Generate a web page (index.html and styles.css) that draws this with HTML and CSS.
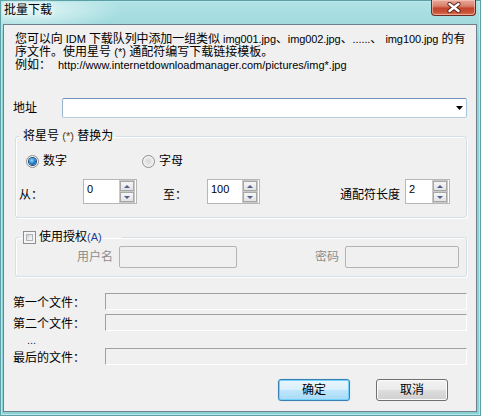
FILE: index.html
```html
<!DOCTYPE html>
<html lang="zh-CN">
<head>
<meta charset="utf-8">
<title>批量下载</title>
<link rel="stylesheet" href="styles.css">
</head>
<body>
<div class="window">
  <div class="titlebar">
    <span class="title">批量下载</span>
    <div class="close">
      <svg width="16" height="11" viewBox="0 0 16 11">
        <path d="M3.5 2 L12.5 9 M12.5 2 L3.5 9" stroke="#5a2418" stroke-width="4.2" stroke-linecap="round"/>
        <path d="M3.5 2 L12.5 9 M12.5 2 L3.5 9" stroke="#ffffff" stroke-width="2.4" stroke-linecap="round"/>
      </svg>
    </div>
  </div>
  <div class="panel">
    <p class="intro">
      <span class="line tight">您可以向 <span class="en">IDM</span> 下载队列中添加一组类似 <span class="en">img001.jpg</span>、<span class="en">img002.jpg</span>、<span class="en">......</span>、 <span class="en">img100.jpg</span> 的有</span>
      <span class="line">序文件。使用星号 <span class="en">(*)</span> 通配符编写下载链接模板。</span>
      <span class="line"><span class="eg">例如：</span><span class="en">http://www.internetdownloadmanager.com/pictures/img*.jpg</span></span>
    </p>

    <div class="addr-row">
      <span class="addr-label">地址</span>
      <div class="combo">
        <svg class="combo-arrow" width="7" height="4" viewBox="0 0 7 4"><polygon points="0,0 7,0 3.5,4" fill="#000"/></svg>
      </div>
    </div>

    <fieldset class="group group-replace">
      <legend class="legend-replace">将星号 <span class="en accent">(*)</span> 替换为</legend>
      <div class="radio-row">
        <span class="radio radio-num"><span class="radio-dot checked"></span>数字</span>
        <span class="radio radio-alpha"><span class="radio-dot"></span>字母</span>
      </div>
      <div class="spin-row">
        <span class="spin-label l-from">从：</span>
        <div class="spin s-from">
          <span class="spin-field en">0</span>
          <span class="spin-btns"><span class="spin-btn up"></span><span class="spin-btn down"></span></span>
        </div>
        <span class="spin-label l-to">至：</span>
        <div class="spin s-to">
          <span class="spin-field en">100</span>
          <span class="spin-btns"><span class="spin-btn up"></span><span class="spin-btn down"></span></span>
        </div>
        <span class="spin-label l-len">通配符长度</span>
        <div class="spin s-len">
          <span class="spin-field en">2</span>
          <span class="spin-btns"><span class="spin-btn up"></span><span class="spin-btn down"></span></span>
        </div>
      </div>
    </fieldset>

    <fieldset class="group group-auth">
      <legend class="legend-auth"><span class="checkbox"><span class="checkbox-inner"></span></span>使用授权<span class="en blue">(A)</span></legend>
      <div class="auth-row">
        <span class="auth-label l-user">用户名</span>
        <span class="auth-input i-user"></span>
        <span class="auth-label l-pass">密码</span>
        <span class="auth-input i-pass"></span>
      </div>
    </fieldset>

    <div class="file-row first">
      <span class="file-label">第一个文件：</span>
      <span class="file-box"></span>
    </div>
    <div class="file-row second">
      <span class="file-label">第二个文件：</span>
      <span class="file-box"></span>
    </div>
    <div class="dots-row"><span class="en dots">...</span></div>
    <div class="file-row last">
      <span class="file-label">最后的文件：</span>
      <span class="file-box"></span>
    </div>

    <div class="button-row">
      <span class="btn btn-default">确定</span>
      <span class="btn">取消</span>
    </div>
  </div>
</div>
</body>
</html>
```

FILE: styles.css
```css
* { box-sizing: border-box; }

html, body {
  margin: 0;
  padding: 0;
  width: 481px;
  height: 416px;
  overflow: hidden;
  background: #9cd8db;
}

body {
  font-family: "Liberation Sans", "Noto Sans CJK SC", sans-serif;
  font-size: 12px;
  color: #000;
}

.en {
  font-family: "Liberation Sans", sans-serif;
  font-size: 11px;
}

.window {
  width: 481px;
  height: 416px;
  padding: 0 4px 4px 3px;
  display: flex;
  flex-direction: column;
  background:
    radial-gradient(ellipse 90px 22px at 30px 10px, rgba(235, 250, 250, 0.85), rgba(235, 250, 250, 0) 100%),
    linear-gradient(to bottom, #b3e3e6 0px, #a2dbde 22px, #8fd3d7 40px, #8ad1d5 100%);
  box-shadow: inset 0 0 0 1px #5e9fa5, inset 0 0 0 2px #b8e8ea;
}

/* title bar */
.titlebar {
  height: 24px;
  display: flex;
  justify-content: space-between;
  align-items: flex-start;
}

.title {
  padding: 3px 0 0 1px;
  line-height: 14px;
  font-size: 12px;
  color: #000;
  text-shadow: 0 0 5px rgba(255, 255, 255, 0.95), 0 0 9px rgba(255, 255, 255, 0.8);
}

.close {
  width: 45px;
  height: 16px;
  margin-right: 1px;
  border: 1px solid #6e2c20;
  border-top: none;
  border-radius: 0 0 4px 4px;
  background: linear-gradient(to bottom, #e9a99b 0%, #d9826c 40%, #c4452c 55%, #c85236 80%, #d9765a 100%);
  box-shadow: inset 0 0 0 1px rgba(255, 210, 200, 0.55);
  display: flex;
  align-items: center;
  justify-content: center;
}

/* main panel */
.panel {
  flex: 1;
  border: 1px solid #6f808c;
  background: #f0f0f0;
  padding: 0 9px;
  display: flex;
  flex-direction: column;
}

.intro {
  margin: 8px 0 0 2px;
  line-height: 13px;
}

.intro .line {
  display: block;
  white-space: nowrap;
  height: 13px;
}

.intro .line.tight {
  letter-spacing: -0.1px;
}

.eg {
  display: inline-block;
  width: 43px;
}

/* address */
.addr-row {
  margin-top: 26px;
  height: 20px;
  display: flex;
  align-items: center;
}

.addr-label {
  width: 49px;
  line-height: 14px;
}

.combo {
  flex: 1;
  height: 20px;
  background: #fff;
  border: 1px solid;
  border-color: #6f93b8 #a6c5de #b3cde2 #9ab5cd;
  border-radius: 2px;
  display: flex;
  align-items: center;
  justify-content: flex-end;
  padding-right: 3px;
}

/* group boxes */
.group {
  margin: 0 0 0 2px;
  padding: 0;
  min-width: 0;
  border: 1px solid #d5dfe5;
  border-radius: 3px;
  box-shadow: inset 1px 1px 0 #fff, 1px 1px 0 #fff;
}

.group legend {
  margin-left: 4px;
  padding: 0 3px;
  height: 14px;
  line-height: 14px;
  white-space: nowrap;
}

.group-replace {
  margin-top: 11px;
  padding-bottom: 13px;
}

.accent { color: #5a3a08; }
.blue { color: #1c3f94; }

.radio-row {
  margin-top: 11px;
  height: 14px;
  display: flex;
  align-items: center;
}

.radio {
  display: inline-flex;
  align-items: center;
  line-height: 14px;
}

.radio-num { margin-left: 10px; width: 116px; }

.radio-dot {
  width: 13px;
  height: 13px;
  border-radius: 50%;
  border: 1px solid #8e8f8f;
  background: radial-gradient(circle at 50% 50%, #d6d6d6 0%, #e8e8e8 45%, #f7f7f7 75%);
  margin-right: 4px;
  display: inline-flex;
  align-items: center;
  justify-content: center;
}

.radio-dot.checked::after {
  content: "";
  width: 7px;
  height: 7px;
  border-radius: 50%;
  background: radial-gradient(circle at 40% 35%, #9bdcff 0%, #2a86d0 45%, #0c4a86 100%);
  box-shadow: 0 0 0 1px #1d4f7e;
}

.spin-row {
  margin-top: 11px;
  height: 25px;
  display: flex;
  align-items: flex-start;
}

.spin-label {
  margin-top: 9px;
  line-height: 14px;
  white-space: nowrap;
}

.l-from { margin-left: 3px; width: 64px; }
.l-to { margin-left: 26px; width: 44px; }
.l-len { margin-left: 80px; width: 65px; }

.spin {
  height: 25px;
  display: flex;
  border: 1px solid #b7b7b7;
  background: #fff;
}

.s-from { width: 54px; }
.s-to { width: 53px; }
.s-len { width: 45px; }

.spin-field {
  flex: 1;
  padding: 3px 0 0 3px;
  line-height: 12px;
}

.spin-btns {
  width: 16px;
  margin: 0 1px 0 0;
  padding: 1px;
  display: flex;
  flex-direction: column;
  gap: 1px;
  background: #c8c8c8;
}

.spin-btn {
  flex: 1;
  background: linear-gradient(to bottom, #f6f6f6, #e2e2e2);
  border: 1px solid #a7a7a7;
  display: flex;
  align-items: center;
  justify-content: center;
}

.spin-btn.up::after {
  content: "";
  border-left: 3px solid transparent;
  border-right: 3px solid transparent;
  border-bottom: 3px solid #4d5f8c;
}

.spin-btn.down::after {
  content: "";
  border-left: 3px solid transparent;
  border-right: 3px solid transparent;
  border-top: 3px solid #4d5f8c;
}

/* auth group */
.group-auth {
  margin-top: 12px;
  padding-bottom: 8px;
}

.group-auth legend {
  padding-right: 20px;
  display: flex;
  align-items: center;
}

.checkbox {
  width: 13px;
  height: 13px;
  border: 1px solid #8e8f8f;
  background: #f4f4f4;
  padding: 2px;
  margin-right: 3px;
  display: inline-flex;
}

.checkbox-inner {
  flex: 1;
  border: 1px solid #aeb3b9;
  background: linear-gradient(135deg, #cfd1d3 0%, #ececec 60%, #fafafa 100%);
}

.auth-row {
  margin-top: 2px;
  height: 22px;
  display: flex;
  align-items: center;
}

.auth-label {
  color: #8d8d8d;
  text-align: right;
  line-height: 14px;
  margin-right: 6px;
}

.l-user { width: 97px; }
.l-pass { width: 102px; }

.auth-input {
  height: 22px;
  border: 1px solid #b2b4b6;
  border-radius: 2px;
  background: #f0f0f0;
}

.i-user { width: 118px; }
.i-pass { width: 114px; }

/* file rows */
.file-row {
  height: 17px;
  display: flex;
  align-items: center;
}

.file-row.first { margin-top: 16px; }
.file-row.second { margin-top: 4px; }

.file-label {
  width: 92px;
  line-height: 14px;
  padding-top: 2px;
  white-space: nowrap;
}

.file-box {
  flex: 1;
  height: 17px;
  border-top: 1px solid #a0a0a0;
  border-left: 1px solid #a0a0a0;
  border-right: 1px solid #ffffff;
  border-bottom: 1px solid #ffffff;
}

.dots-row {
  height: 17px;
  line-height: 19px;
}

.dots {
  margin-left: 14px;
  color: #1a2a5a;
}

/* buttons */
.button-row {
  margin-top: 14px;
  padding-right: 19px;
  display: flex;
  justify-content: flex-end;
  gap: 26px;
}

.btn {
  width: 72px;
  height: 22px;
  border: 1px solid #707070;
  border-radius: 3px;
  background: linear-gradient(to bottom, #f2f2f2 0%, #ebebeb 48%, #dddddd 52%, #cfcfcf 100%);
  box-shadow: inset 0 0 0 1px #fbfbfb;
  display: flex;
  align-items: center;
  justify-content: center;
  line-height: 14px;
}

.btn-default {
  border-color: #3c7fb1;
  background: linear-gradient(to bottom, #eaf6fd 0%, #d9f0fc 48%, #bee6fd 52%, #a7d9f5 100%);
  box-shadow: inset 0 0 0 1px #6fd3fb, 0 0 1px #5ac8f5;
}
```
